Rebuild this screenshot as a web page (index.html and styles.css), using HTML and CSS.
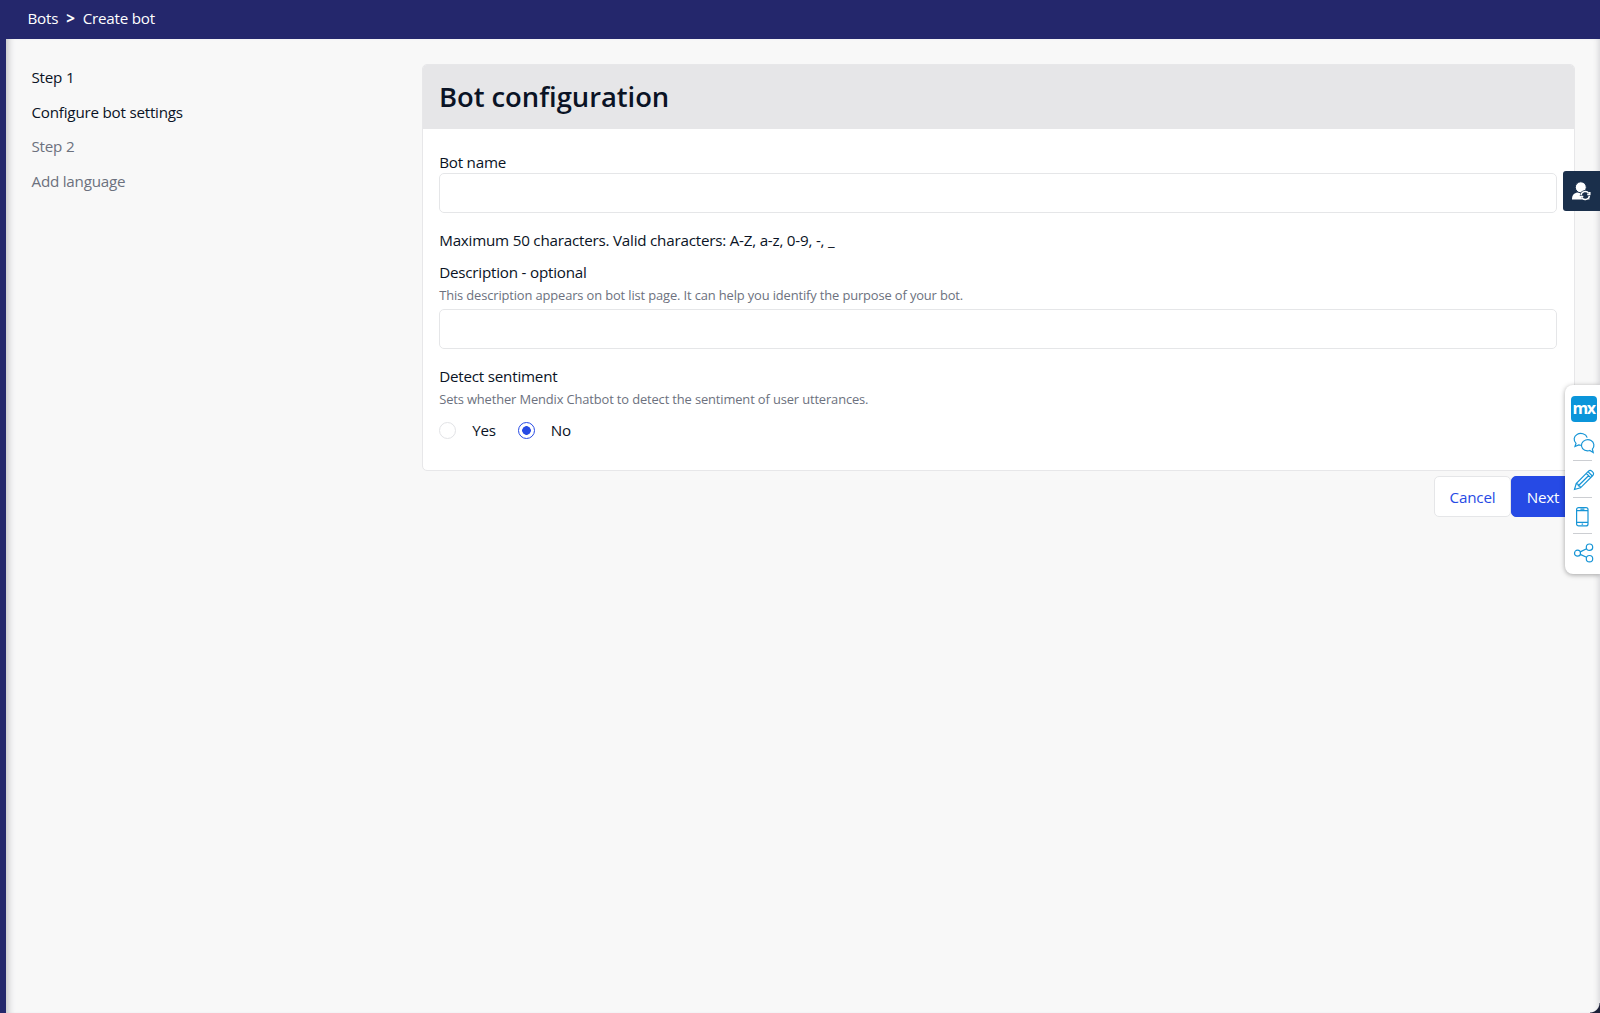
FILE: index.html
```html
<!DOCTYPE html>
<html lang="en">
<head>
<meta charset="utf-8">
<title>Create bot</title>
<link rel="stylesheet" href="styles.css">
</head>
<body>
<div class="app">
  <header class="topbar">
    <a class="crumb">Bots</a><span class="crumb-sep">&gt;</span><span class="crumb">Create bot</span>
  </header>
  <div class="page">
    <nav class="steps">
      <div class="step">Step 1</div>
      <div class="step">Configure bot settings</div>
      <div class="step muted">Step 2</div>
      <div class="step muted">Add language</div>
    </nav>
    <main class="content">
      <section class="card">
        <h1 class="card-head">Bot configuration</h1>
        <div class="card-body">
          <label class="label" for="name">Bot name</label>
          <input class="input" id="name" type="text">
          <p class="note">Maximum 50 characters. Valid characters: A-Z, a-z, 0-9, -, _</p>
          <label class="label desc" for="desc">Description - optional</label>
          <p class="hint">This description appears on bot list page. It can help you identify the purpose of your bot.</p>
          <input class="input" id="desc" type="text">
          <div class="label sentiment">Detect sentiment</div>
          <p class="hint">Sets whether Mendix Chatbot to detect the sentiment of user utterances.</p>
          <div class="radios">
            <label class="radio"><span class="dot"></span>Yes</label>
            <label class="radio"><span class="dot on"></span>No</label>
          </div>
        </div>
      </section>
      <div class="actions">
        <button class="btn cancel">Cancel</button>
        <button class="btn next">Next</button>
      </div>
    </main>
  </div>
  <div class="corner"></div>
  <div class="user-tab">
    <svg width="20" height="20" viewBox="0 0 20 20">
      <path fill="#fff" d="M1 18.500c0-4 1.400-6 5-7h8c3 .8 4.500 3.200 4.500 7z"/>
      <circle cx="9.800" cy="6.300" r="5.500" fill="#fff" stroke="#1a2f4b"/>
      <circle cx="14.200" cy="14.300" r="5.300" fill="#1a2f4b"/>
      <path fill="none" stroke="#fff" stroke-width="1.500" d="M10 14.200a4.300 4.300 0 0 1 7.700-2M18.400 14.800a4.300 4.300 0 0 1-7.700 2M18.800 11v2.600h-2.600M9.700 18v-2.600h2.600"/>
    </svg>
  </div>
  <aside class="tools">
    <div class="mx">mx</div>
    <svg class="tool chat" width="22" height="22" viewBox="0 0 22 22">
      <path d="M8.500 13.200c-1 .1-2 0-2.800-.3L2 14.500l1-3.200C.2 8.500.7 4.300 4 2.400c3.600-2.200 9-.7 10.200 3.200"/>
      <path d="M20.200 20.500l-.8-3.300c2.500-2.800 1.800-6.800-1.300-8.600-3.300-1.900-8-.6-9.300 2.800-1.500 4 1.700 7.500 5.700 7.500.8 0 1.600-.1 2.300-.4z"/>
    </svg>
    <hr class="rule">
    <svg class="tool pencil" width="22" height="22" viewBox="0 0 22 22">
      <path d="M1.500 20.500l1.700-6L15.500 2.200c1-1 2.300-1 3.300 0l1 1c1 1 1 2.300 0 3.300L7.500 18.800zM13.300 4.400l4.300 4.300M15 2.700l4.300 4.300M3.200 14.500l1.700.6.500 1.600 1.500.5.600 1.600M5.400 16.700L16 6.200"/>
    </svg>
    <hr class="rule">
    <svg class="tool phone" width="22" height="22" viewBox="0 0 22 22">
      <rect x="3.600" y="1.600" width="11.400" height="18.300" rx="2"/>
      <path d="M3.600 4.600h11.400M3.600 16.400h11.400M7.400 3.100h4M8.600 18.100h1.500"/>
    </svg>
    <hr class="rule">
    <svg class="tool share" width="22" height="22" viewBox="0 0 22 22">
      <circle cx="4.500" cy="11.200" r="3"/><circle cx="16.500" cy="5.200" r="3.200"/><circle cx="16.500" cy="16.700" r="3.200"/>
      <path d="M7.200 9.900l6.400-3.200M7.200 12.400l6.400 2.900"/>
    </svg>
  </aside>
</div>
</body>
</html>
```
FILE: styles.css
```css
* { box-sizing: border-box; }
body {
  margin: 0;
  font: 15.2px/20px "Open Sans", "Noto Sans", sans-serif;
  letter-spacing: -.22px;
  color: #0a1325;
  background: #24276c;
}
h1, p { margin: 0; }
.app {
  position: relative;
  height: 1013px;
  display: flex;
  flex-direction: column;
  overflow: hidden;
}
.topbar {
  height: 39px;
  display: flex;
  align-items: center;
  padding: 0 27.500px 4px;
  background: #24276c;
  color: #fff;
}
.crumb-sep { margin: 0 8px; font-weight: 700; }
.page {
  flex: 1;
  display: flex;
  margin-left: 6px;
  padding: 25px 25px 0 25px;
  background: #f8f8f8;
  box-shadow: inset 8px 0 7px -6px #bcbcc0, inset -6px 0 6px -5px #d0d0d4;
}
.steps { width: 391px; padding: 3px 0 0 .5px; }
.step { height: 34.600px; line-height: 20px; }
.muted { color: #6c717e; }
.content { flex: 1; min-width: 0; }
.card {
  height: 407px;
  border: 1px solid #e7e7e9;
  border-radius: 5px;
  background: #fff;
  overflow: hidden;
}
.card-head {
  height: 64px;
  padding: 0 16px;
  background: #e6e6e8;
  font-size: 27.400px;
  font-weight: 600;
  line-height: 64px;
  letter-spacing: -.04px;
}
.card-body { padding: 23px 17px 0 16.200px; }
.label { display: block; height: 20px; }
.input {
  display: block;
  width: 100%;
  height: 40px;
  margin-top: 1px;
  border: 1px solid #e5e6e8;
  border-radius: 5px;
  background: #fff;
  font: inherit;
}
.note { margin-top: 17px; }
.desc { margin-top: 12px; }
.hint { height: 24px; padding-top: 4px; font-size: 12.900px; line-height: 18px; letter-spacing: -.127px; color: #6c717e; }
.hint + .input { margin-top: 3px; }
.sentiment { margin-top: 17px; }
.radios { display: flex; gap: 22px; margin-top: 10px; }
.radio { display: flex; align-items: center; }
.dot {
  width: 17px;
  height: 17px;
  margin-right: 16px;
  border: 1px solid #e2e3e6;
  border-radius: 50%;
}
.dot.on {
  border-color: #264ae5;
  background: radial-gradient(circle, #264ae5 4px, #fff 4.600px);
}
.actions { display: flex; justify-content: flex-end; margin-top: 5px; }
.btn {
  height: 41px;
  padding: 0;
  border: 1px solid #e5e6e8;
  border-radius: 5px;
  font: inherit;
  letter-spacing: -.2px;
}
.cancel { width: 77px; background: #fff; color: #264ae5; }
.next { width: 64px; background: #264ae5; border-color: #264ae5; color: #fff; }
.user-tab {
  position: absolute;
  right: 0;
  top: 171px;
  width: 37px;
  height: 40px;
  padding: 10px 8px;
  border-radius: 3px 0 0 3px;
  background: #1a2f4b;
}
.user-tab svg { display: block; }
.tools {
  position: absolute;
  right: 0;
  top: 385px;
  width: 35px;
  height: 189px;
  padding: 11px 0 0 6px;
  border-radius: 8px 0 0 8px;
  background: #fff;
  box-shadow: 0 1px 5px rgba(0, 0, 0, .35);
}
.mx {
  width: 26px;
  height: 26px;
  padding-right: 1px;
  border-radius: 4px;
  background: #0b95da;
  color: #fff;
  font-size: 16px;
  font-weight: 700;
  line-height: 24px;
  text-align: center;
  letter-spacing: -1.400px;
}
.tool { display: block; margin-left: 2px; fill: none; stroke: #1795d6; stroke-width: 1.200; }
.chat { margin-top: 10px; }
.rule { width: 19px; height: 1px; margin: 6px 0 8px 2px; border: 0; background: #ccced2; }
.pencil + .rule, .phone + .rule { margin-top: 5.700px; }
.corner {
  position: absolute;
  right: 0;
  bottom: 0;
  width: 10px;
  height: 10px;
  background: radial-gradient(circle at 0 0, transparent 9px, #1c2038 10px);
}
```
